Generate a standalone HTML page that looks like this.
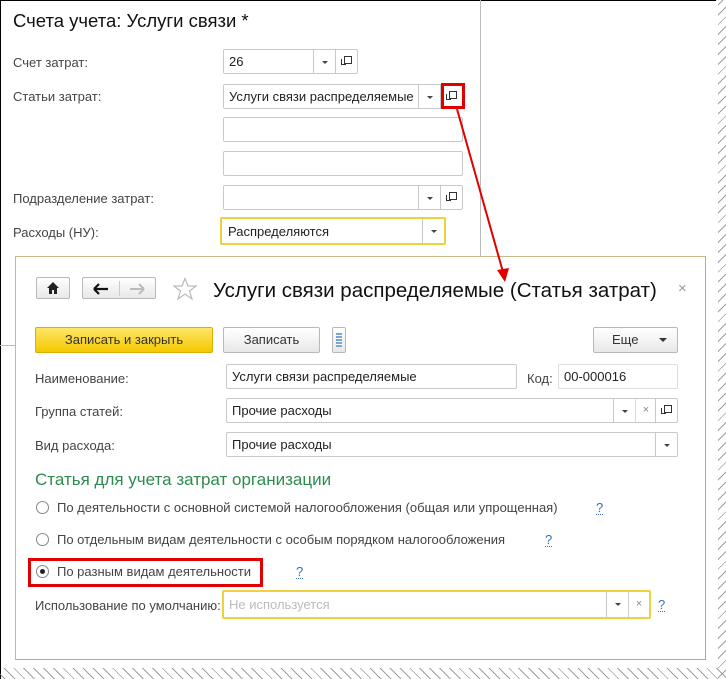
<!DOCTYPE html>
<html><head><meta charset="utf-8"><style>
*{box-sizing:border-box;margin:0;padding:0}
body{width:726px;height:679px;background:#fff;font-family:"Liberation Sans",sans-serif;font-size:13px;color:#333;position:relative;overflow:hidden}
.a{position:absolute}
.f{position:absolute;border:1px solid #c9c9c9;border-radius:2px;background:#fff;height:25px;padding:4px 5px;white-space:nowrap;color:#222}
.dd{position:absolute;top:0;bottom:0;width:22px;border-left:1px solid #c9c9c9}
.dd:after{content:"";position:absolute;left:8px;top:11px;border:3px solid transparent;border-top:3px solid #444}
.op{position:absolute;top:0;bottom:0;width:22px;border-left:1px solid #c9c9c9}
.op:before{content:"";position:absolute;left:8px;top:6px;width:6px;height:6px;border:1px solid #333}
.op:after{content:"";position:absolute;left:5px;top:9px;width:4px;height:5px;border-left:1px solid #333;border-bottom:1px solid #333}
.lbl{position:absolute;color:#444;white-space:nowrap}
.btn{position:absolute;border:1px solid #b8b8b8;border-radius:2px;background:linear-gradient(#fff,#e8e8e8);text-align:center;color:#333}
.rad{position:absolute;width:13px;height:13px;border:1px solid #888;border-radius:50%;background:#fff}
.q{position:absolute;color:#3a6fbf;border-bottom:1px dotted #3a6fbf;line-height:13px}
</style></head><body>
<div class="a" style="left:0;top:0;width:1px;height:679px;background:#000"></div>
<div class="a" style="left:0;top:0;width:716px;height:1px;background:#000"></div>
<div class="a" style="left:480px;top:0;width:1px;height:256px;background:#bbb"></div>
<div class="a" style="left:0;top:345px;width:16px;height:1px;background:#bbb"></div>
<div class="a" style="left:13px;top:10px;font-size:18.5px;color:#111">Счета учета: Услуги связи *</div>
<div class="lbl" style="left:13px;top:55px">Счет затрат:</div>
<div class="f" style="left:223px;top:49px;width:135px">26<div class="dd" style="right:22px"></div><div class="op" style="right:0"></div></div>
<div class="lbl" style="left:13px;top:89px">Статьи затрат:</div>
<div class="f" style="left:223px;top:84px;width:240px">Услуги связи распределяемые<div class="dd" style="right:22px"></div><div class="op" style="right:0"></div></div>
<div class="a" style="left:441px;top:83px;width:24px;height:26px;border:3px solid #e00000"></div>
<div class="f" style="left:223px;top:117px;width:240px"></div>
<div class="f" style="left:223px;top:151px;width:240px"></div>
<div class="lbl" style="left:13px;top:191px">Подразделение затрат:</div>
<div class="f" style="left:223px;top:185px;width:240px"><div class="dd" style="right:22px"></div><div class="op" style="right:0"></div></div>
<div class="lbl" style="left:13px;top:225px">Расходы (НУ):</div>
<div class="f" style="left:220px;top:217px;width:226px;height:28px;border:2px solid #f0d040;padding:5px 6px">Распределяются<div class="dd" style="right:0"></div></div>

<div class="a" style="left:15px;top:256px;width:691px;height:404px;border:1px solid #c8b98a;border-right-color:#aaa;border-bottom-color:#aaa;background:#fff"></div>
<svg class="a" style="left:0;top:0" width="726" height="679"><line x1="457" y1="109" x2="503" y2="272" stroke="#e00000" stroke-width="2"/><polygon points="497,270 509,268 505,282" fill="#e00000"/></svg>

<div class="btn" style="left:36px;top:277px;width:34px;height:22px"><svg width="14" height="14" style="margin-top:3px" viewBox="0 0 14 14"><path d="M1 7L7 1L13 7H11V13H8V9H6V13H3V7Z" fill="#222"/></svg></div>
<div class="btn" style="left:82px;top:277px;width:74px;height:22px">
<svg class="a" style="left:10px;top:5px" width="16" height="12" viewBox="0 0 16 12"><path d="M1 6H15M1 6L6 1M1 6L6 11" stroke="#111" stroke-width="2.2" fill="none"/></svg>
<div class="a" style="left:36px;top:3px;width:1px;height:15px;background:#ccc"></div>
<svg class="a" style="left:46px;top:5px" width="16" height="12" viewBox="0 0 16 12"><path d="M1 6H15M15 6L10 1M15 6L10 11" stroke="#bbb" stroke-width="2" fill="none"/></svg></div>
<svg class="a" style="left:173px;top:277px" width="24" height="24" viewBox="0 0 24 24"><path d="M12 1.5L15 9H23L16.5 14L19 22L12 17L5 22L7.5 14L1 9H9Z" fill="none" stroke="#bbb" stroke-width="1.2"/></svg>
<div class="a" style="left:213px;top:279px;font-size:20.5px;color:#111;white-space:nowrap">Услуги связи распределяемые (Статья затрат)</div>
<div class="a" style="left:678px;top:280px;font-size:15px;color:#999">×</div>

<div class="btn" style="left:35px;top:327px;width:178px;height:26px;background:linear-gradient(#ffe566,#f4c800);border-color:#d8b200;line-height:24px;color:#333">Записать и закрыть</div>
<div class="btn" style="left:223px;top:327px;width:97px;height:26px;line-height:24px">Записать</div>
<div class="btn" style="left:332px;top:327px;width:14px;height:26px"><div style="margin:5px auto;width:6px;height:14px;background:repeating-linear-gradient(#7aa7d8 0 2px,#fff 2px 3px)"></div></div>
<div class="btn" style="left:593px;top:327px;width:85px;height:26px;line-height:24px;text-align:left;padding-left:18px">Еще<span style="position:absolute;right:10px;top:10px;border:4px solid transparent;border-top:4px solid #333"></span></div>

<div class="lbl" style="left:35px;top:371px">Наименование:</div>
<div class="f" style="left:226px;top:364px;width:291px">Услуги связи распределяемые</div>
<div class="lbl" style="left:527px;top:371px">Код:</div>
<div class="f" style="left:558px;top:364px;width:120px;border-color:#ddd">00-000016</div>
<div class="lbl" style="left:35px;top:404px">Группа статей:</div>
<div class="f" style="left:226px;top:398px;width:452px">Прочие расходы<div class="dd" style="right:42px"></div><div class="a" style="right:21px;top:0;bottom:0;width:21px;border-left:1px solid #ddd;text-align:center;color:#888;font-size:11px;padding-top:5px">×</div><div class="op" style="right:0"></div></div>
<div class="lbl" style="left:35px;top:438px">Вид расхода:</div>
<div class="f" style="left:226px;top:432px;width:452px">Прочие расходы<div class="dd" style="right:0"></div></div>

<div class="a" style="left:35px;top:470px;font-size:17px;color:#2e8b4e;white-space:nowrap">Статья для учета затрат организации</div>
<div class="rad" style="left:36px;top:501px"></div><div class="lbl" style="left:57px;top:500px">По деятельности с основной системой налогообложения (общая или упрощенная)</div><div class="q" style="left:596px;top:501px">?</div>
<div class="rad" style="left:36px;top:533px"></div><div class="lbl" style="left:57px;top:532px">По отдельным видам деятельности с особым порядком налогообложения</div><div class="q" style="left:545px;top:533px">?</div>
<div class="rad" style="left:36px;top:565px"><div style="margin:3px;width:5px;height:5px;border-radius:50%;background:#222"></div></div><div class="lbl" style="left:57px;top:564px">По разным видам деятельности</div><div class="q" style="left:296px;top:565px">?</div>
<div class="a" style="left:28px;top:558px;width:235px;height:29px;border:3px solid #e00000"></div>
<div class="lbl" style="left:35px;top:598px">Использование по умолчанию:</div>
<div class="f" style="left:222px;top:590px;width:429px;height:29px;border:2px solid #f0d040;color:#bbb;padding:5px 5px">Не используется<div class="dd" style="right:21px"></div><div class="a" style="right:0;top:0;bottom:0;width:21px;border-left:1px solid #ccc;text-align:center;color:#888;font-size:11px;padding-top:6px">×</div></div>
<div class="q" style="left:658px;top:598px">?</div>

<div class="a" style="left:718px;top:0;width:8px;height:679px;background:repeating-linear-gradient(135deg,transparent 0 3px,#888 3px 4px,transparent 4px 7px);opacity:.8"></div>
<div class="a" style="left:0;top:668px;width:726px;height:11px;background:repeating-linear-gradient(45deg,transparent 0 3px,#888 3px 4px,transparent 4px 7px);opacity:.8"></div>
</body></html>
